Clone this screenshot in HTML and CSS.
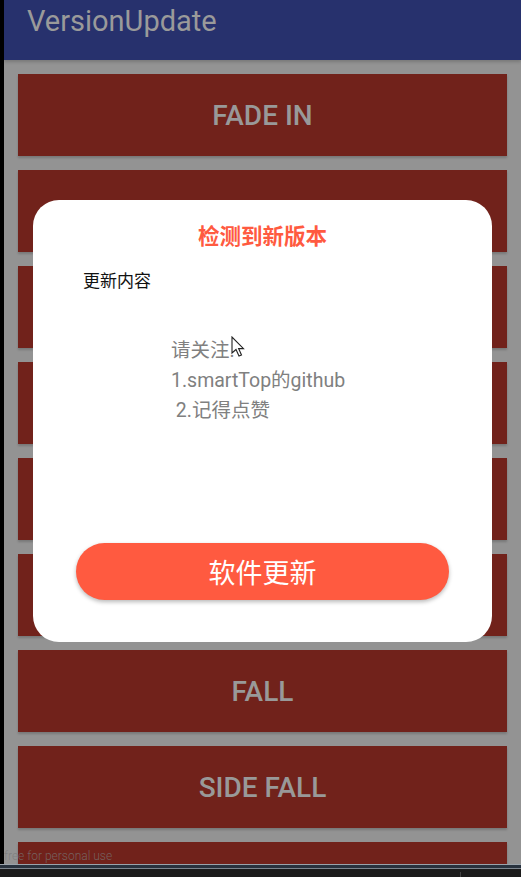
FILE: index.html
```html
<!DOCTYPE html>
<html>
<head>
<meta charset="utf-8">
<link rel="stylesheet" href="styles.css">
</head>
<body>
<div class="app">
  <div class="main">
    <div class="strip"></div>
    <div class="phone">
      <header class="toolbar"><span class="title">VersionUpdate</span></header>
      <div class="list">
        <div class="item">FADE IN</div>
        <div class="item">SLIDE LEFT</div>
        <div class="item">SLIDE RIGHT</div>
        <div class="item">SLIDE TOP</div>
        <div class="item">SLIDE BOTTOM</div>
        <div class="item">NEWS PAPER</div>
        <div class="item">FALL</div>
        <div class="item">SIDE FALL</div>
        <div class="item"></div>
      </div>
      <div class="dialog">
        <div class="d-title">检测到新版本</div>
        <div class="d-label">更新内容</div>
        <div class="d-content">
          <div class="line">请关注.</div>
          <div class="line">1.smartTop的github</div>
          <div class="line">&nbsp;2.记得点赞</div>
        </div>
        <div class="d-action"><div class="d-btn">软件更新</div></div>
      </div>
      <svg class="cursor" width="14" height="22" viewBox="0 0 14 22">
        <path d="M1 1 L1 17 L5 13.5 L8 20 L10.5 19 L7.6 12.6 L12.5 12.6 Z" fill="#fff" stroke="#222" stroke-width="1.1" stroke-linejoin="miter"/>
      </svg>
      <div class="watermark">free for personal use</div>
    </div>
  </div>
  <div class="taskbar">
    <div class="tb-line1"></div>
    <div class="tb-band"></div>
    <div class="tb-line2"></div>
    <div class="tb-base"><span class="tb-tick"></span></div>
  </div>
</div>
</body>
</html>
```
FILE: styles.css
```css
* { box-sizing: border-box; }
html, body { margin: 0; padding: 0; }
body {
  width: 521px;
  height: 877px;
  overflow: hidden;
  background: #1c1c1c;
  font-family: Roboto, "Noto Sans CJK SC", sans-serif;
}
.app { display: flex; flex-direction: column; height: 877px; }
.main { display: flex; height: 864px; }
.strip { width: 4px; background: #000; flex: none; }
.phone {
  position: relative;
  flex: 1;
  background: #939393;
  overflow: hidden;
}
.toolbar {
  height: 60px;
  background: #27316d;
  padding-left: 23px;
  display: flex;
  align-items: flex-start;
  box-shadow: 0 2px 3px rgba(0,0,0,0.18);
  position: relative;
  z-index: 1;
}
.title {
  color: #9a9a9a;
  font-size: 29px;
  line-height: 42px;
  font-weight: 400;
}
.list {
  display: flex;
  flex-direction: column;
  gap: 14px;
  padding: 14px 14px 0 14px;
}
.item {
  height: 82px;
  flex: none;
  background: #71221b;
  color: #999;
  font-size: 28px;
  font-weight: 500;
  display: flex;
  align-items: center;
  justify-content: center;
  box-shadow: 0 2px 2px rgba(0,0,0,0.18);
}
.dialog {
  position: absolute;
  left: 29px;
  top: 200px;
  width: 459px;
  height: 442px;
  background: #fff;
  border-radius: 26px;
  display: flex;
  flex-direction: column;
  font-family: "Noto Sans CJK SC", Roboto, sans-serif;
}
.d-title {
  margin-top: 21px;
  text-align: center;
  color: #ff5a40;
  font-size: 21.5px;
  font-weight: 700;
  line-height: 28px;
}
.d-label {
  margin-top: 19px;
  margin-left: 50px;
  font-size: 17px;
  line-height: 24px;
  color: #111;
}
.d-content {
  margin-top: 44px;
  margin-left: 138px;
  color: #808080;
  font-size: 19.5px;
  font-family: Roboto, "Noto Sans CJK SC", sans-serif;
}
.line { line-height: 30px; }
.d-action {
  margin-top: auto;
  margin-bottom: 42px;
  padding: 0 43px;
}
.d-btn {
  height: 57px;
  border-radius: 29px;
  background: #ff5a40;
  color: #fff;
  font-size: 27px;
  display: flex;
  align-items: center;
  justify-content: center;
  box-shadow: 0 2px 4px rgba(0,0,0,0.28);
}
.cursor {
  position: absolute;
  left: 227px;
  top: 336px;
}
.watermark {
  position: absolute;
  left: 0;
  top: 848px;
  font-size: 12px;
  font-weight: 300;
  color: rgba(120,120,120,0.75);
  line-height: 16px;
}
.taskbar { display: flex; flex-direction: column; height: 13px; }
.tb-line1 { height: 1px; background: #9aa3ab; }
.tb-band { height: 3px; background: #28323e; }
.tb-line2 { height: 1px; background: #7d858e; }
.tb-base { flex: 1; background: #1b1b1b; position: relative; }
.tb-tick { position: absolute; left: 460px; top: 3px; width: 1px; height: 5px; background: #444; }
```
